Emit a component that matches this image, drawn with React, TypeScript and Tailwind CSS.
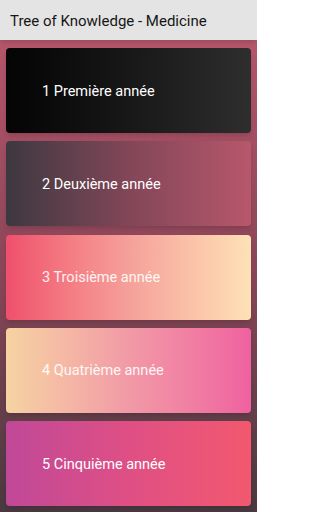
const years = [
  { label: '1 Première année', bg: 'bg-gradient-to-r from-[#050505] to-[#2e2e2e]', text: 'text-white' },
  { label: '2 Deuxième année', bg: 'bg-gradient-to-r from-[#3d3840] via-[#824658] to-[#b8576b]', text: 'text-white' },
  { label: '3 Troisième année', bg: 'bg-gradient-to-r from-[#ef4f6c] via-[#f5a09a] to-[#fde2b6]', text: 'text-white/90' },
  { label: '4 Quatrième année', bg: 'bg-gradient-to-r from-[#f6d3a2] via-[#f19aa6] to-[#ef61a0]', text: 'text-white/90' },
  { label: '5 Cinquième année', bg: 'bg-gradient-to-r from-[#c04898] via-[#df4f84] to-[#f2586e]', text: 'text-white' },
]

export default function App() {
  return (
    <div className="w-[257px] h-[512px] flex flex-col overflow-hidden font-['Roboto',sans-serif]">
      {/* App bar */}
      <div className="h-10 shrink-0 bg-[#e4e4e4] flex items-center px-2.5 pt-0.5 shadow-md z-10">
        <span className="text-[15px] text-[#161616]">Tree of Knowledge - Medicine</span>
      </div>

      {/* Year list */}
      <div className="flex-1 bg-gradient-to-b from-[#b7566b] via-[#8a4558] to-[#4a3940] px-1.5 pt-2 flex flex-col gap-[8.25px]">
        {years.map((y) => (
          <div
            key={y.label}
            className={`h-[85px] rounded-[4px] shadow-md flex items-center pl-9 pt-0.5 ${y.bg}`}
          >
            <span className={`text-[14.5px] ${y.text}`}>{y.label}</span>
          </div>
        ))}
      </div>
    </div>
  )
}
